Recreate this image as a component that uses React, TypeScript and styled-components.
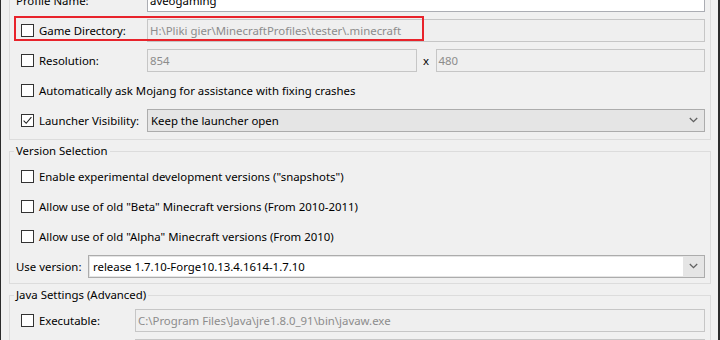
import styled, { createGlobalStyle } from "styled-components";

const GlobalStyle = createGlobalStyle`
  html, body {
    margin: 0;
    padding: 0;
    background: #f0f0f0;
  }
  body {
    font-family: "Noto Sans", "Segoe UI", sans-serif;
    font-size: 11.4px;
    color: #000;
    overflow: hidden;
  }
`;

const Window = styled.div`
  width: 720px;
  height: 340px;
  box-sizing: border-box;
  border-left: 1px solid #2b2b2b;
  border-right: 2px solid #2b2b2b;
  padding: 0 7px 0 8px;
  overflow: hidden;
`;

const Stack = styled.div`
  display: flex;
  flex-direction: column;
  gap: 3px;
  margin-top: -37px;
`;

const Group = styled.fieldset`
  margin: 0;
  padding: 0;
  border: 1px solid #dcdcdc;
  min-width: 0;
`;

const Legend = styled.legend`
  margin-left: 4px;
  padding: 0 2px;
  line-height: 16px;
  color: #000;
`;

const Body = styled.div<{ $top?: number; $bottom?: number }>`
  display: flex;
  flex-direction: column;
  padding: ${(p) => p.$top ?? 2}px 5px ${(p) => p.$bottom ?? 2}px 6px;
`;

const Row = styled.div<{ $label?: number }>`
  position: relative;
  display: grid;
  grid-template-columns: ${(p) => (p.$label ? `${p.$label}px 1fr` : "1fr")};
  align-items: center;
  height: 30px;
`;

const Label = styled.span`
  white-space: nowrap;
`;

const Check = styled.label`
  display: flex;
  align-items: center;
  gap: 5px;
  margin-left: 5px;
  white-space: nowrap;
`;

const Box = styled.span`
  width: 13px;
  height: 13px;
  box-sizing: border-box;
  border: 1px solid #333;
  background: #fff;
  display: flex;
  align-items: center;
  justify-content: center;
  flex: none;
`;

const Field = styled.div<{ $disabled?: boolean }>`
  height: 23px;
  box-sizing: border-box;
  border: 1px solid ${(p) => (p.$disabled ? "#c6c6c6" : "#abadb3")};
  background: ${(p) => (p.$disabled ? "#efefef" : "#fff")};
  color: ${(p) => (p.$disabled ? "#8c8c8c" : "#000")};
  padding: 0 2px;
  display: flex;
  align-items: center;
  white-space: nowrap;
  overflow: hidden;
  min-width: 0;
  flex: 1;
`;

const Pair = styled.div`
  display: flex;
  align-items: center;
`;

const Times = styled.span`
  width: 19px;
  text-align: center;
  color: #000;
`;

const Combo = styled.div`
  height: 23px;
  box-sizing: border-box;
  border: 1px solid #acacac;
  background: #e5e5e5;
  display: flex;
  align-items: stretch;
  min-width: 0;
`;

const ComboText = styled.div<{ $editable?: boolean }>`
  flex: 1;
  display: flex;
  align-items: center;
  padding: 0 3px;
  background: ${(p) => (p.$editable ? "#fff" : "transparent")};
  margin: ${(p) => (p.$editable ? "1px 0 1px 1px" : "0")};
  white-space: nowrap;
  overflow: hidden;
`;

const ComboButton = styled.div`
  width: 21px;
  display: flex;
  align-items: center;
  justify-content: center;
  flex: none;
`;

const Highlight = styled.div`
  position: absolute;
  left: -2px;
  top: 1px;
  width: 410px;
  height: 25px;
  box-sizing: border-box;
  border: 2px solid #e8232b;
  pointer-events: none;
`;

const Chevron = () => (
  <svg width="9" height="6" viewBox="0 0 9 6">
    <path d="M0.8 1 L4.5 4.6 L8.2 1" fill="none" stroke="#606060" strokeWidth="1.3" />
  </svg>
);

const CheckBox = ({ checked }: { checked?: boolean }) => (
  <Box>
    {checked && (
      <svg width="11" height="11" viewBox="0 0 11 11">
        <path d="M1.6 5.6 L4.2 8.3 L9.4 2.2" fill="none" stroke="#222" strokeWidth="1.1" />
      </svg>
    )}
  </Box>
);

const Dropdown = ({ value, editable }: { value: string; editable?: boolean }) => (
  <Combo>
    <ComboText $editable={editable}>{value}</ComboText>
    <ComboButton>
      <Chevron />
    </ComboButton>
  </Combo>
);

export default function App() {
  return (
    <>
      <GlobalStyle />
      <Window>
        <Stack>
          <Group>
            <Legend>Profile Info</Legend>
            <Body $top={6} $bottom={4}>
              <Row $label={131}>
                <Label>Profile Name:</Label>
                <Field>aveogaming</Field>
              </Row>
              <Row $label={131}>
                <Check>
                  <CheckBox />
                  Game Directory:
                </Check>
                <Field $disabled>H:\Pliki gier\MinecraftProfiles\tester\.minecraft</Field>
                <Highlight />
              </Row>
              <Row $label={131}>
                <Check>
                  <CheckBox />
                  Resolution:
                </Check>
                <Pair>
                  <Field $disabled>854</Field>
                  <Times>x</Times>
                  <Field $disabled>480</Field>
                </Pair>
              </Row>
              <Row>
                <Check>
                  <CheckBox />
                  Automatically ask Mojang for assistance with fixing crashes
                </Check>
              </Row>
              <Row $label={131}>
                <Check>
                  <CheckBox checked />
                  Launcher Visibility:
                </Check>
                <Dropdown value="Keep the launcher open" />
              </Row>
            </Body>
          </Group>

          <Group>
            <Legend>Version Selection</Legend>
            <Body>
              <Row>
                <Check>
                  <CheckBox />
                  Enable experimental development versions ("snapshots")
                </Check>
              </Row>
              <Row>
                <Check>
                  <CheckBox />
                  Allow use of old "Beta" Minecraft versions (From 2010-2011)
                </Check>
              </Row>
              <Row>
                <Check>
                  <CheckBox />
                  Allow use of old "Alpha" Minecraft versions (From 2010)
                </Check>
              </Row>
              <Row $label={72}>
                <Label>Use version:</Label>
                <Dropdown value="release 1.7.10-Forge10.13.4.1614-1.7.10" editable />
              </Row>
            </Body>
          </Group>

          <Group>
            <Legend>Java Settings (Advanced)</Legend>
            <Body>
              <Row $label={119}>
                <Check>
                  <CheckBox />
                  Executable:
                </Check>
                <Field $disabled>C:\Program Files\Java\jre1.8.0_91\bin\javaw.exe</Field>
              </Row>
              <Row $label={119}>
                <Check>
                  <CheckBox />
                  JVM Arguments:
                </Check>
                <Field $disabled>-Xmx1G</Field>
              </Row>
            </Body>
          </Group>
        </Stack>
      </Window>
    </>
  );
}
